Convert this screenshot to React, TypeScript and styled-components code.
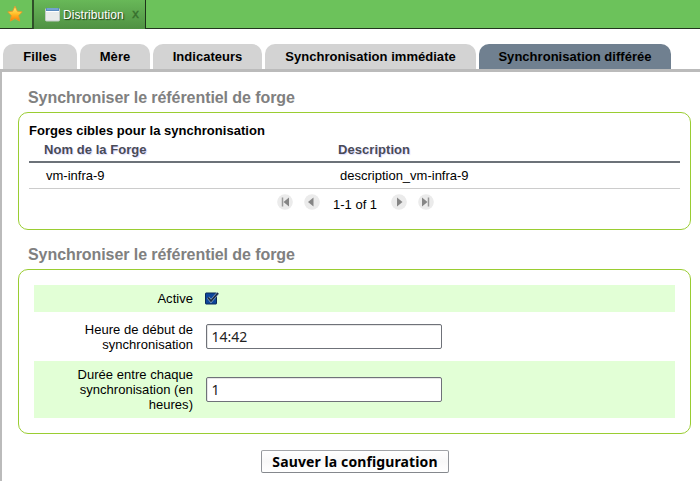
import React from "react";
import styled, { createGlobalStyle } from "styled-components";

const GlobalStyle = createGlobalStyle`
  * { box-sizing: border-box; }
  body {
    margin: 0;
    background: #fff;
    color: #000;
    font: 13px/15px "Liberation Sans", Arial, sans-serif;
    overflow: hidden;
  }
`;

const Page = styled.div`
  display: flex;
  flex-direction: column;
  height: 481px;
`;

const TopBar = styled.header`
  display: flex;
  height: 29px;
  flex: none;
  background: #6cc25b;
`;

const HomeCell = styled.div`
  width: 34px;
  padding: 5px 0 0 6px;
  border-bottom: 1px solid #23351f;
  border-right: 2px solid #2f4f29;
`;

const DocumentTab = styled.div`
  display: flex;
  width: 112px;
  padding: 0 0 0 11px;
  border-right: 1px solid #1e331a;
  background: linear-gradient(#68b858, #4f9143);
  color: #fff;
  font-size: 12px;
  line-height: 30px;
  text-shadow: 1px 1px 1px #1d3a18;
`;

const TabIcon = styled.svg`
  flex: none;
  margin: 7px 3px 0 0;
`;

const TabTitle = styled.span`
  width: 69px;
  letter-spacing: 0.06px;
`;

const TabClose = styled.span`
  color: #37702e;
  font-family: "DejaVu Sans", sans-serif;
  font-size: 12px;
  -webkit-text-stroke: 0.4px #37702e;
  line-height: 28px;
  text-shadow: none;
`;

const BarRest = styled.div`
  flex: 1;
  border-bottom: 1px solid #23351f;
`;

const Tabs = styled.nav`
  display: flex;
  flex: none;
  gap: 3px;
  height: 43px;
  padding: 15px 0 0 3px;
  border-bottom: 3px solid #bbb;
`;

const Tab = styled.div<{ $width: number; $active?: boolean }>`
  width: ${(p) => p.$width}px;
  height: 25px;
  border-radius: 10px 10px 0 0;
  background: ${(p) => (p.$active ? "#708090" : "#d3d3d3")};
  font-weight: bold;
  letter-spacing: 0.03px;
  line-height: 25px;
  text-align: center;
  white-space: nowrap;
`;

const Content = styled.main`
  flex: 1;
  padding: 17px 9px 0 16px;
  border-left: 2px solid #bbb;
`;

const SectionTitle = styled.h2`
  margin: 0 0 5px 10px;
  color: #808080;
  font-size: 16px;
  letter-spacing: -0.07px;
  line-height: 18px;
`;

const Panel = styled.section<{ $height: number; $pad: string; $gap?: number }>`
  height: ${(p) => p.$height}px;
  margin-bottom: ${(p) => p.$gap ?? 0}px;
  padding: ${(p) => p.$pad};
  border: 1px solid #9acd32;
  border-radius: 10px;
`;

const Caption = styled.div`
  height: 18px;
  font-weight: bold;
  letter-spacing: 0.03px;
  line-height: 17px;
`;

const HeadRow = styled.div`
  display: grid;
  grid-template-columns: 294px 1fr;
  height: 23px;
  padding-left: 15px;
  border-bottom: 2px solid #6c7279;
  color: #494b57;
  font-weight: bold;
  letter-spacing: 0.05px;
  line-height: 20px;
  text-shadow: 1px 1px 1px #dcdcff;
`;

const DataRow = styled.div`
  display: grid;
  grid-template-columns: 294px 1fr;
  height: 26px;
  padding-left: 17px;
  border-bottom: 1px solid #ccc;
  line-height: 25px;
`;

const Pager = styled.div`
  display: flex;
  align-items: flex-start;
  gap: 11px;
  padding: 5px 0 0 248px;
`;

const PageCount = styled.span`
  width: 47px;
  margin: 3px 0 0 2px;
  white-space: nowrap;
`;

const FormRow = styled.div<{ $height: number; $tinted?: boolean }>`
  display: grid;
  grid-template-columns: 159px 1fr;
  column-gap: 13px;
  align-items: center;
  height: ${(p) => p.$height}px;
  background: ${(p) => (p.$tinted ? "#e2ffd6" : "transparent")};
`;

const Label = styled.label`
  padding-left: 40px;
  letter-spacing: 0.03px;
  text-align: right;
`;

const Field = styled.input`
  display: block;
  width: 236px;
  height: 25px;
  margin: 0;
  padding: 0 4.5px;
  border: 1px solid #6f7279;
  border-radius: 2px;
  background: #fff;
  box-shadow: inset 1px 1px 0 #e6e6e6;
  color: #222;
  font: 14px "Noto Sans", sans-serif;
`;

const CheckIcon = styled.svg`
  display: block;
  margin-left: -1px;
`;

const SaveButton = styled.button`
  display: block;
  width: 188px;
  height: 23px;
  margin: 16px 0 0 243px;
  padding: 0;
  border: 1px solid;
  border-color: #a2a4a8 #92959a #85888d;
  border-radius: 2px;
  background: linear-gradient(#fff, #f8f8f8 50%, #fff);
  color: #000;
  font: bold 14px/20px "Noto Sans", sans-serif;
  letter-spacing: 0.11px;
  white-space: nowrap;
`;

const Star = () => (
  <svg width="18" height="18" viewBox="0 0 18 18">
    <defs>
      <linearGradient id="star" x1="0" y1="0" x2="0" y2="1">
        <stop offset="0" stopColor="#fff07c" />
        <stop offset="0.5" stopColor="#ffc12b" />
        <stop offset="1" stopColor="#ff7900" />
      </linearGradient>
    </defs>
    <path
      d="M9 1.2 11.3 6.2l4.9.7-3.5 3.7 1 5.5L9 13.6l-4.7 2.5 1-5.5L1.8 6.9l4.9-.7Z"
      fill="url(#star)"
      stroke="#e29a2c"
      strokeWidth=".9"
      strokeLinejoin="round"
    />
  </svg>
);

type Step = "first" | "prev" | "next" | "last";

const arrowPaths: Record<Step, string> = {
  first: "M12 3.5v9L6.5 8Z",
  prev: "M9.5 3.5v9L4 8Z",
  next: "M6 3.5v9L11.5 8Z",
  last: "M4 3.5v9L9.5 8Z",
};

const PagerIcon = ({ step }: { step: Step }) => (
  <svg width="16" height="16" viewBox="0 0 16 16">
    <circle cx="8" cy="8" r="7.8" fill="#ebebeb" />
    <path d={arrowPaths[step]} fill="#858585" />
    {step === "first" && <path d="M5.5 3.5v9" stroke="#999" strokeWidth="1.5" />}
    {step === "last" && <path d="M10.5 3.5v9" stroke="#999" strokeWidth="1.5" />}
  </svg>
);

export default function App() {
  return (
    <>
      <GlobalStyle />
      <Page>
        <TopBar>
          <HomeCell>
            <Star />
          </HomeCell>
          <DocumentTab>
            <TabIcon width="15" height="15" viewBox="0 0 15 15">
              <rect x=".5" y="1.5" width="14" height="12.5" rx="1" fill="#e9eceb" stroke="#c1ccc6" />
              <path d="M1 1h13v3H1z" fill="#598bc0" />
              <path d="M2 2h11" stroke="#8fb9df" />
              <path d="M1 4.5h13" stroke="#fff" />
            </TabIcon>
            <TabTitle>Distribution</TabTitle>
            <TabClose>x</TabClose>
          </DocumentTab>
          <BarRest />
        </TopBar>
        <Tabs>
          <Tab $width={74}>Filles</Tab>
          <Tab $width={70}>Mère</Tab>
          <Tab $width={109}>Indicateurs</Tab>
          <Tab $width={211}>Synchronisation immédiate</Tab>
          <Tab $width={192} $active>
            Synchronisation différée
          </Tab>
        </Tabs>
        <Content>
          <SectionTitle>Synchroniser le référentiel de forge</SectionTitle>
          <Panel $height={118} $pad="9px 10px 0" $gap={16}>
            <Caption>Forges cibles pour la synchronisation</Caption>
            <HeadRow>
              <span>Nom de la Forge</span>
              <span>Description</span>
            </HeadRow>
            <DataRow>
              <span>vm-infra-9</span>
              <span>description_vm-infra-9</span>
            </DataRow>
            <Pager>
              <PagerIcon step="first" />
              <PagerIcon step="prev" />
              <PageCount>1-1 of 1</PageCount>
              <PagerIcon step="next" />
              <PagerIcon step="last" />
            </Pager>
          </Panel>
          <SectionTitle>Synchroniser le référentiel de forge</SectionTitle>
          <Panel $height={165} $pad="15px">
            <FormRow $height={27} $tinted>
              <Label>Active</Label>
              <CheckIcon width="15" height="13" viewBox="0 0 15 13">
                <rect x=".5" y="1" width="11" height="11" rx=".5" fill="#0c459b" stroke="#0a2858" />
                <path d="M3 5.5 6 9 13 1" fill="none" stroke="#8fa6c4" strokeWidth="2.8" />
                <path d="M3 5.5 6 9 13 1" fill="none" stroke="#1b2d46" strokeWidth="1.8" />
              </CheckIcon>
            </FormRow>
            <FormRow $height={49}>
              <Label>Heure de début de synchronisation</Label>
              <Field defaultValue="14:42" />
            </FormRow>
            <FormRow $height={57} $tinted>
              <Label>Durée entre chaque synchronisation (en heures)</Label>
              <Field defaultValue="1" />
            </FormRow>
          </Panel>
          <SaveButton>Sauver la configuration</SaveButton>
        </Content>
      </Page>
    </>
  );
}
